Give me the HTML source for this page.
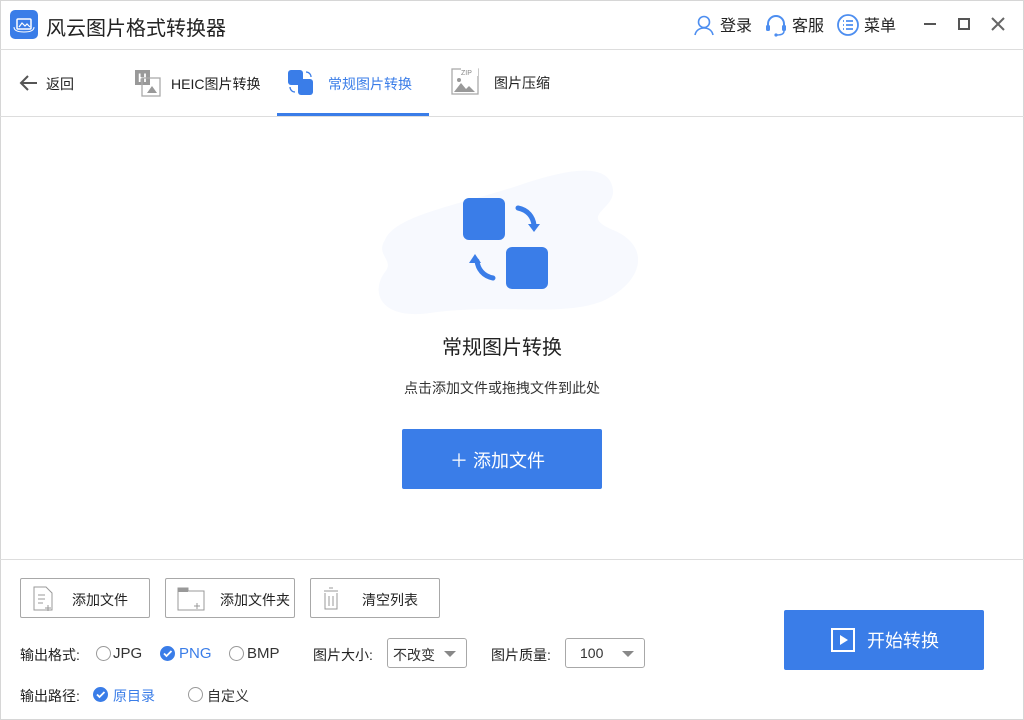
<!DOCTYPE html>
<html><head><meta charset="utf-8"><style>
*{margin:0;padding:0;box-sizing:border-box}
body{width:1024px;height:720px;background:#fff;font-family:"Liberation Sans","Noto Sans CJK SC",sans-serif;color:#333;position:relative;overflow:hidden}
.win{position:absolute;left:0;top:0;width:1024px;height:720px;border:1px solid #d6d6d6}
.abs{position:absolute}
.t{position:absolute;white-space:nowrap}
.btn{position:absolute;top:578px;width:130px;height:40px;border:1px solid #a8a8a8;border-radius:2px;background:#fff}
.btn span{position:absolute;top:11px;font-size:14px;color:#222}
.radio{position:absolute;width:15px;height:15px;border-radius:50%;border:1px solid #999;background:#fff}
.chk{position:absolute;width:15px;height:15px;border-radius:50%;background:#3a7de8}
.sel{position:absolute;top:638px;height:30px;border:1px solid #a8a8a8;border-radius:3px;font-size:14px}
.tri{position:absolute;width:0;height:0;border-left:6px solid transparent;border-right:6px solid transparent;border-top:6px solid #888}
</style></head><body>
<div class="win"></div>
<div class="abs" style="left:10px;top:10px;width:28px;height:29px;background:#3a7de8;border-radius:5px"></div>
<svg class="abs" style="left:10px;top:10px" width="28" height="29"><rect x="7" y="9" width="14" height="10" rx="1" fill="none" stroke="#fff" stroke-width="1.5"/><path d="M9 17l3-4 3 3 2-2 3 3" stroke="#fff" stroke-width="1.2" fill="none"/><path d="M4 17c0 4 5 5 10 5s10-1 10-5" stroke="#fff" stroke-width="1" fill="none"/></svg>
<div class="t" style="left:46px;top:12px;font-size:20px;color:#222">风云图片格式转换器</div>
<svg class="abs" style="left:693px;top:14px" width="22" height="22"><circle cx="11" cy="8" r="5.5" fill="none" stroke="#4d8ef0" stroke-width="1.6"/><path d="M2 21c1-5 5-7 9-7s8 2 9 7" fill="none" stroke="#4d8ef0" stroke-width="1.6"/></svg>
<div class="t" style="left:720px;top:12px;font-size:16px;color:#222">登录</div>
<svg class="abs" style="left:764px;top:13px" width="24" height="24"><path d="M4 15v-4a8 8 0 0 1 16 0v4" fill="none" stroke="#4d8ef0" stroke-width="2"/><rect x="2" y="12" width="4" height="6" rx="1.5" fill="#4d8ef0"/><rect x="18" y="12" width="4" height="6" rx="1.5" fill="#4d8ef0"/><path d="M20 18c0 3-3 4-7 4" fill="none" stroke="#4d8ef0" stroke-width="1.5"/><circle cx="12" cy="22" r="1.6" fill="#4d8ef0"/></svg>
<div class="t" style="left:792px;top:12px;font-size:16px;color:#222">客服</div>
<svg class="abs" style="left:836px;top:13px" width="24" height="24"><circle cx="12" cy="12" r="10" fill="none" stroke="#4d8ef0" stroke-width="1.8"/><path d="M7 8h1M10 8h7M7 12h1M10 12h7M7 16h1M10 16h7" stroke="#4d8ef0" stroke-width="1.8"/></svg>
<div class="t" style="left:864px;top:12px;font-size:16px;color:#222">菜单</div>
<div class="abs" style="left:924px;top:23px;width:12px;height:2px;background:#555"></div>
<div class="abs" style="left:958px;top:18px;width:12px;height:12px;border:2px solid #555"></div>
<svg class="abs" style="left:991px;top:17px" width="14" height="14"><path d="M1 1l12 12M13 1L1 13" stroke="#666" stroke-width="2"/></svg>
<div class="abs" style="left:0;top:49px;width:1024px;height:1px;background:#ddd"></div>
<svg class="abs" style="left:18px;top:74px" width="20" height="18"><path d="M19 9H3M10 2L3 9l7 7" fill="none" stroke="#555" stroke-width="2"/></svg>
<div class="t" style="left:46px;top:74px;font-size:14px;color:#222">返回</div>
<svg class="abs" style="left:134px;top:69px" width="28" height="28"><rect x="1" y="1" width="15" height="15" fill="#999"/><text x="4" y="13" font-size="12" fill="#fff" font-family="Liberation Sans" font-weight="bold">H</text><rect x="8" y="9" width="18" height="18" fill="none" stroke="#aaa" stroke-width="1.3"/><path d="M13 24l5-7 5 7z" fill="#999"/></svg>
<div class="t" style="left:171px;top:74px;font-size:14px;color:#222">HEIC图片转换</div>
<svg class="abs" style="left:287px;top:69px" width="28" height="28"><rect x="1" y="1" width="15" height="15" rx="3" fill="#3a7de8"/><rect x="11" y="10" width="15" height="16" rx="3" fill="#3a7de8"/><path d="M19 3a5 5 0 0 1 5 5M3 18a5 5 0 0 0 5 5" stroke="#3a7de8" stroke-width="1.3" fill="none"/></svg>
<div class="t" style="left:328px;top:74px;font-size:14px;color:#3a7de8">常规图片转换</div>
<div class="abs" style="left:277px;top:113px;width:152px;height:3px;background:#3a7de8"></div>
<svg class="abs" style="left:451px;top:67px" width="28" height="28"><rect x="1" y="2" width="26" height="25" fill="none" stroke="#aaa" stroke-width="1.3"/><rect x="10" y="1" width="17" height="8" fill="#fff"/><text x="10" y="8" font-size="7" fill="#888" font-family="Liberation Sans">ZIP</text><path d="M3 25l7-9 5 6 3-3 6 6z" fill="#999"/><circle cx="8" cy="13" r="2" fill="#999"/></svg>
<div class="t" style="left:494px;top:73px;font-size:14px;color:#222">图片压缩</div>
<div class="abs" style="left:0;top:116px;width:1024px;height:1px;background:#ddd"></div>
<svg class="abs" style="left:370px;top:160px" width="280" height="160"><path d="M15 80C25 55 90 45 150 25 200 8 240 2 243 30 245 50 208 55 243 70 280 85 275 120 235 140 195 158 130 143 60 153 10 160 0 132 15 112 25 100 5 95 15 80Z" fill="#f7f9fe"/></svg>
<div class="abs" style="left:463px;top:198px;width:42px;height:42px;border-radius:6px;background:#3a7de8"></div>
<div class="abs" style="left:506px;top:247px;width:42px;height:42px;border-radius:6px;background:#3a7de8"></div>
<svg class="abs" style="left:460px;top:200px" width="90" height="90"><path d="M58 8c10 2 15 9 16 17" fill="none" stroke="#3a7de8" stroke-width="5" stroke-linecap="round"/><path d="M68 24h12l-6 8z" fill="#3a7de8"/><path d="M33 78c-10-2-15-9-16-17" fill="none" stroke="#3a7de8" stroke-width="5" stroke-linecap="round"/><path d="M9 63h12l-6-9z" fill="#3a7de8"/></svg>
<div class="t" style="left:0;width:1004px;text-align:center;top:331px;font-size:20px;color:#222">常规图片转换</div>
<div class="t" style="left:0;width:1004px;text-align:center;top:378px;font-size:14px;color:#333">点击添加文件或拖拽文件到此处</div>
<div class="abs" style="left:402px;top:429px;width:200px;height:60px;background:#3a7de8;border-radius:2px"></div>
<div class="t" style="left:450px;top:447px;font-size:18px;color:#fff">＋ 添加文件</div>
<div class="abs" style="left:0;top:559px;width:1024px;height:1px;background:#ddd"></div>
<div class="btn" style="left:20px"><svg class="abs" style="left:12px;top:7px" width="22" height="26"><path d="M1 1h12l6 6v17H1z" fill="none" stroke="#999"/><path d="M5 9h7M5 13h7M5 17h5M15 19v6M12 22h6" stroke="#999"/></svg><span style="left:51px">添加文件</span></div>
<div class="btn" style="left:165px"><svg class="abs" style="left:11px;top:8px" width="28" height="24"><path d="M1 1h10v3h16v19H1z" fill="none" stroke="#999"/><path d="M1 1h10v4H1z" fill="#999"/><path d="M20 16v6M17 19h6" stroke="#999"/></svg><span style="left:54px">添加文件夹</span></div>
<div class="btn" style="left:310px"><svg class="abs" style="left:10px;top:7px" width="22" height="26"><path d="M3 5h14M8 2h4M4 7v16h12V7M8 10v10M12 10v10" fill="none" stroke="#999"/></svg><span style="left:51px">清空列表</span></div>
<div class="t" style="left:20px;top:645px;font-size:14px;color:#222">输出格式:</div>
<div class="radio" style="left:96px;top:646px"></div><div class="t" style="left:113px;top:645px;font-size:15px">JPG</div>
<div class="chk" style="left:160px;top:646px"></div><svg class="abs" style="left:160px;top:646px" width="15" height="15"><path d="M4 7.5l2.5 2.5 5-5" stroke="#fff" stroke-width="1.8" fill="none"/></svg><div class="t" style="left:179px;top:645px;font-size:15px;color:#3a7de8">PNG</div>
<div class="radio" style="left:229px;top:646px"></div><div class="t" style="left:247px;top:645px;font-size:15px">BMP</div>
<div class="t" style="left:313px;top:645px;font-size:14px;color:#222">图片大小:</div>
<div class="sel" style="left:387px;width:80px"><span class="t" style="left:5px;top:6px">不改变</span><div class="tri" style="left:56px;top:12px"></div></div>
<div class="t" style="left:491px;top:645px;font-size:14px;color:#222">图片质量:</div>
<div class="sel" style="left:565px;width:80px"><span class="t" style="left:14px;top:6px">100</span><div class="tri" style="left:56px;top:12px"></div></div>
<div class="t" style="left:20px;top:686px;font-size:14px;color:#222">输出路径:</div>
<div class="chk" style="left:93px;top:687px"></div><svg class="abs" style="left:93px;top:687px" width="15" height="15"><path d="M4 7.5l2.5 2.5 5-5" stroke="#fff" stroke-width="1.8" fill="none"/></svg><div class="t" style="left:113px;top:686px;font-size:14px;color:#3a7de8">原目录</div>
<div class="radio" style="left:188px;top:687px"></div><div class="t" style="left:207px;top:686px;font-size:14px">自定义</div>
<div class="abs" style="left:784px;top:610px;width:200px;height:60px;background:#3a7de8;border-radius:2px"></div>
<svg class="abs" style="left:831px;top:628px" width="24" height="24"><rect x="1" y="1" width="22" height="22" fill="none" stroke="#fff" stroke-width="2"/><path d="M9 7v10l8-5z" fill="#fff"/></svg>
<div class="t" style="left:867px;top:627px;font-size:18px;color:#fff">开始转换</div>
</body></html>
